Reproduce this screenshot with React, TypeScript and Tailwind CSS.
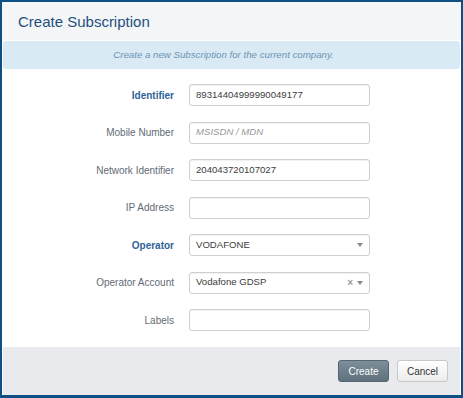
import React from "react";

type Row = {
  label: string;
  required?: boolean;
  value?: string;
  placeholder?: string;
  select?: boolean;
  clearable?: boolean;
};

const rows: Row[] = [
  { label: "Identifier", required: true, value: "89314404999990049177" },
  { label: "Mobile Number", placeholder: "MSISDN / MDN" },
  { label: "Network Identifier", value: "204043720107027" },
  { label: "IP Address" },
  { label: "Operator", required: true, value: "VODAFONE", select: true },
  { label: "Operator Account", value: "Vodafone GDSP", select: true, clearable: true },
  { label: "Labels" },
];

const Caret = () => (
  <svg width="6" height="4" viewBox="0 0 6 4" className="shrink-0">
    <path d="M0 0 L6 0 L3 4 Z" fill="#8a8a8a" />
  </svg>
);

const Field: React.FC<{ row: Row }> = ({ row }) => (
  <div className="flex items-center">
    <label
      className={
        row.required
          ? "w-[172px] text-right text-[10px] font-bold text-[#2f6398]"
          : "w-[172px] text-right text-[10px] text-[#5f6b75]"
      }
    >
      {row.label}
    </label>
    <div className="ml-[15px] flex h-[22px] w-[181px] items-center rounded-[3px] border border-[#cfcfcf] bg-white pl-[6px] pr-[6px] shadow-[inset_0_1px_1px_rgba(0,0,0,0.06)]">
      {row.value ? (
        <span className="flex-1 text-[9.6px] text-[#3c3c3c]">{row.value}</span>
      ) : row.placeholder ? (
        <span className="flex-1 text-[9.6px] italic text-[#999]">{row.placeholder}</span>
      ) : (
        <span className="flex-1" />
      )}
      {row.clearable && (
        <span className="mr-[4px] text-[10px] font-bold leading-none text-[#999]">×</span>
      )}
      {row.select && <Caret />}
    </div>
  </div>
);

export default function App() {
  return (
    <div
      className="h-[398px] w-[463px] bg-[#0e4f84] pb-[3px] pl-[2px] pr-[2px] pt-[2px]"
      style={{ fontFamily: '"Liberation Sans", Arial, sans-serif' }}
    >
      <div className="flex h-full flex-col bg-white">
        <div className="flex h-[38px] items-center bg-[#f4f5f7] pl-[16px] pt-[3px]">
          <h2 className="text-[15px] text-[#1f5080]">Create Subscription</h2>
        </div>
        <div className="mx-px mt-px flex h-[28px] items-center justify-center rounded-[3px] bg-[#d9eaf4] pr-[16px]">
          <p className="text-[9.7px] italic text-[#6b93b5]">
            Create a new Subscription for the current company.
          </p>
        </div>
        <div className="flex flex-1 flex-col gap-[15.5px] pt-[15px]">
          {rows.map((r) => (
            <Field key={r.label} row={r} />
          ))}
        </div>
        <div className="mx-px flex h-[48px] items-center justify-end gap-[8px] bg-[#e8eaed] pr-[12px]">
          <button className="h-[22px] w-[51px] rounded-[3px] border border-[#56656f] bg-gradient-to-b from-[#7d8f9b] to-[#5f717d] text-[10px] text-white">
            Create
          </button>
          <button className="h-[22px] w-[51px] rounded-[3px] border border-[#c8c8c8] bg-gradient-to-b from-white to-[#ececec] text-[10px] text-[#333]">
            Cancel
          </button>
        </div>
      </div>
    </div>
  );
}
